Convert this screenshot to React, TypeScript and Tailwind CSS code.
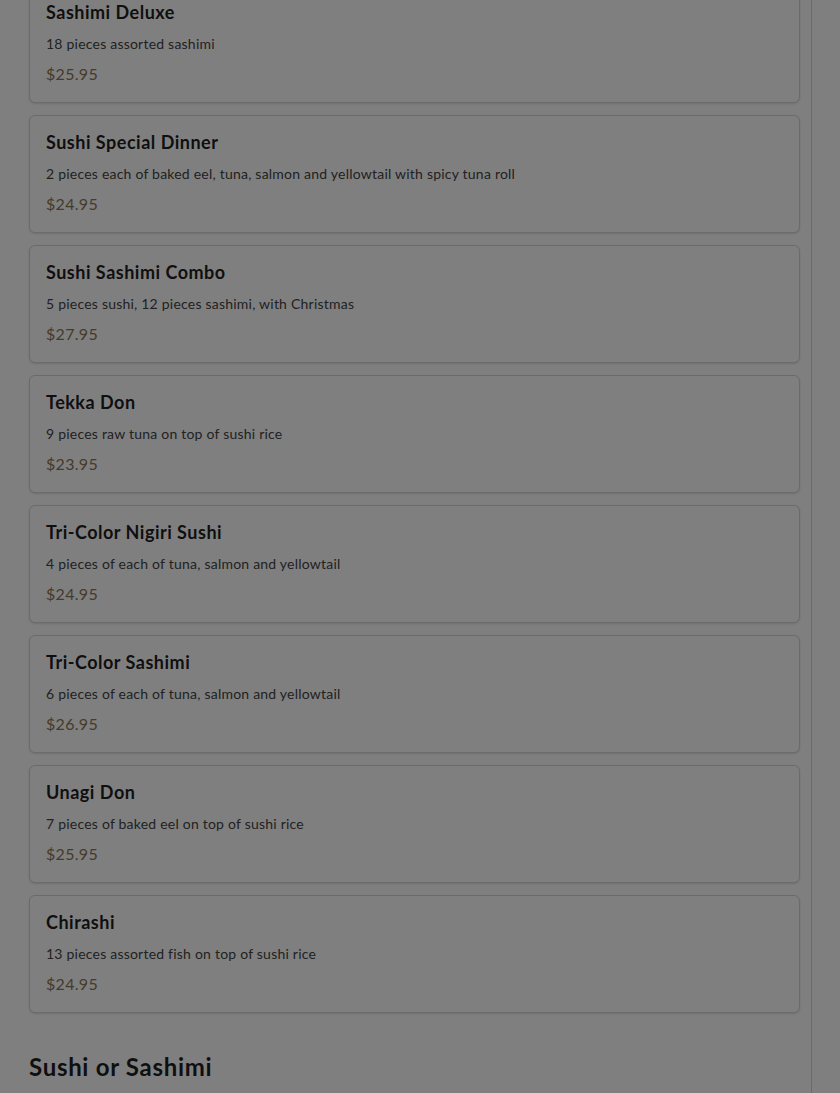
import React from 'react';

type Item = {
  name: string;
  desc: string;
  price: string;
};

const items: Item[] = [
  { name: 'Sashimi Deluxe', desc: '18 pieces assorted sashimi', price: '$25.95' },
  { name: 'Sushi Special Dinner', desc: '2 pieces each of baked eel, tuna, salmon and yellowtail with spicy tuna roll', price: '$24.95' },
  { name: 'Sushi Sashimi Combo', desc: '5 pieces sushi, 12 pieces sashimi, with Christmas', price: '$27.95' },
  { name: 'Tekka Don', desc: '9 pieces raw tuna on top of sushi rice', price: '$23.95' },
  { name: 'Tri-Color Nigiri Sushi', desc: '4 pieces of each of tuna, salmon and yellowtail', price: '$24.95' },
  { name: 'Tri-Color Sashimi', desc: '6 pieces of each of tuna, salmon and yellowtail', price: '$26.95' },
  { name: 'Unagi Don', desc: '7 pieces of baked eel on top of sushi rice', price: '$25.95' },
  { name: 'Chirashi', desc: '13 pieces assorted fish on top of sushi rice', price: '$24.95' },
];

function MenuCard({ item }: { item: Item }) {
  return (
    <div className="mb-3 rounded-md border border-[#d6d6d6] bg-white px-4 pt-3 pb-4 shadow-sm">
      <p className="text-lg font-bold leading-7 tracking-[0.5px] text-[#1f1f1f]">{item.name}</p>
      <p className="mt-2 text-sm leading-5 tracking-[0.22px] text-[#444]">{item.desc}</p>
      <p className="mt-2 text-base leading-6 tracking-[0.3px] text-[#8a7652]">{item.price}</p>
    </div>
  );
}

function App() {
  return (
    <div
      className="relative flex h-[1093px] w-[840px] overflow-hidden bg-white"
      style={{ fontFamily: 'Lato, "Open Sans", sans-serif' }}
    >
      <div className="w-[812px] shrink-0 border-r border-[#d4d4d4] pl-[29px] pr-[11px]">
        <div className="-mt-[15px]">
          {items.map((item) => (
            <MenuCard key={item.name} item={item} />
          ))}
        </div>
        <h2 className="mt-[38px] text-2xl font-bold leading-8 tracking-[0.7px] text-[#1f1f1f]">Sushi or Sashimi</h2>
      </div>
      <div className="absolute inset-0 bg-black/50" />
    </div>
  );
}

export default App;
